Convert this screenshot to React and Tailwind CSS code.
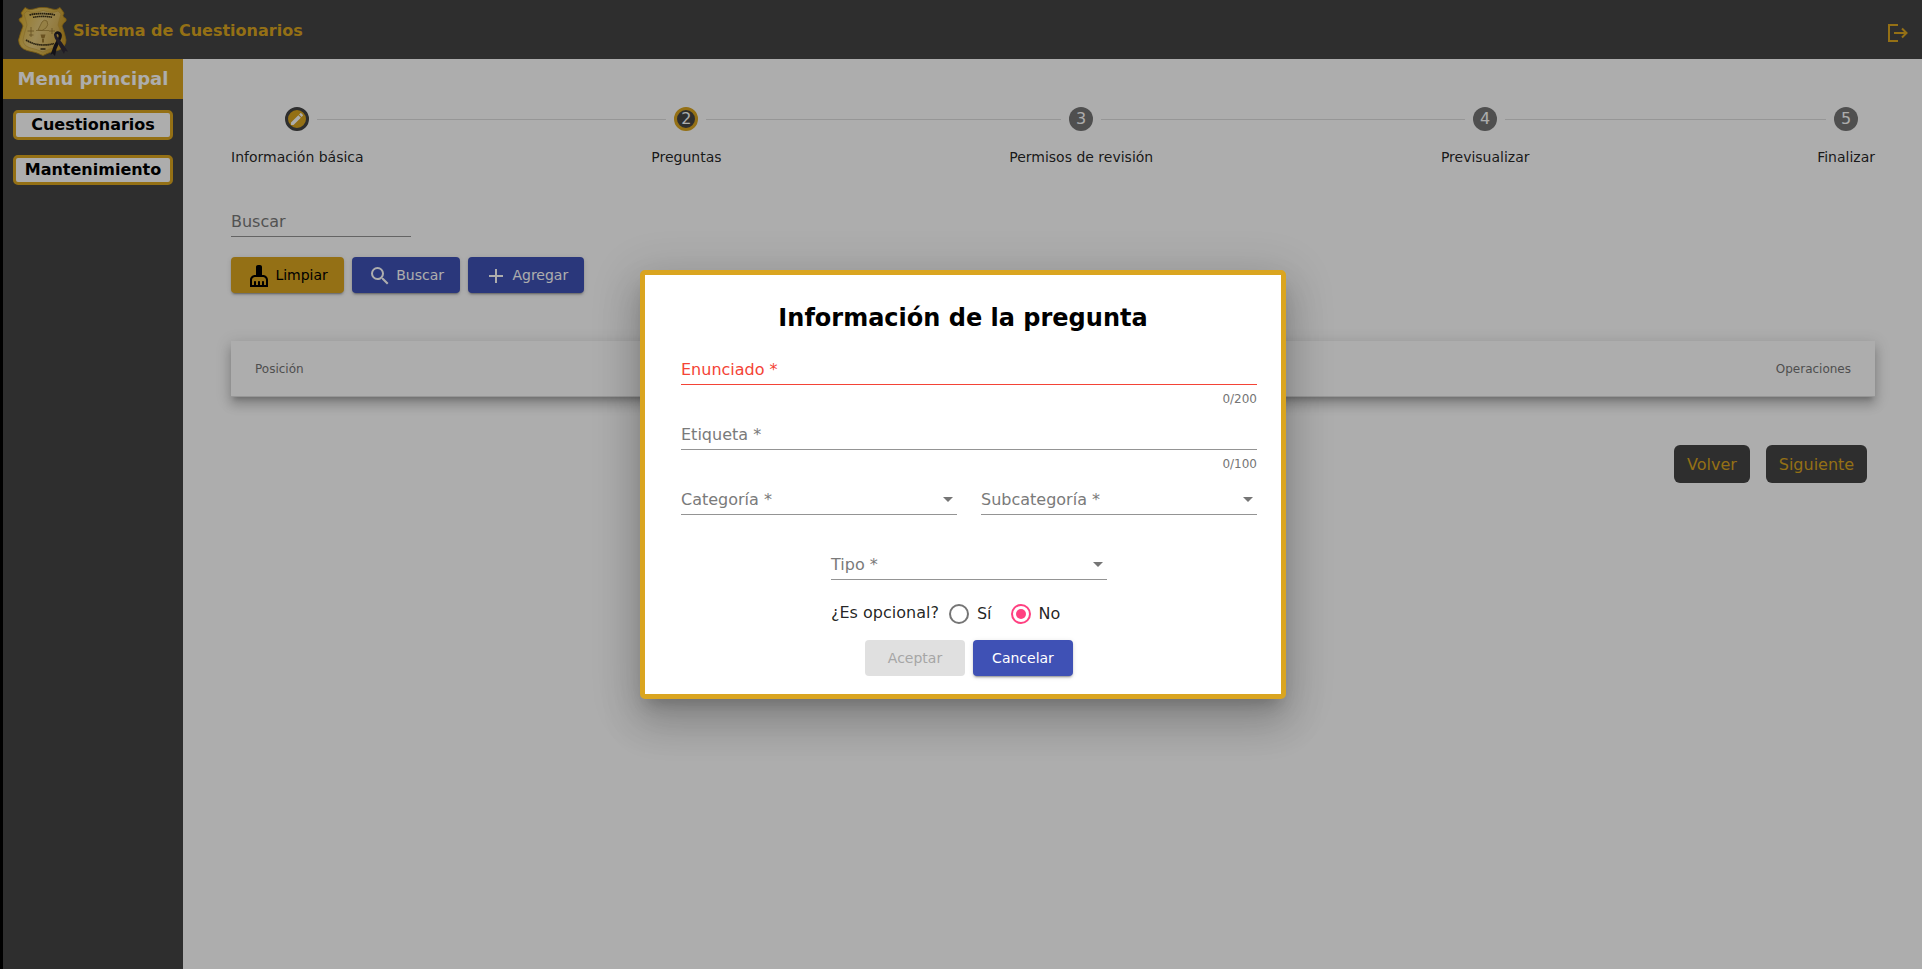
import React from "react";

const steps = ["Información básica", "Preguntas", "Permisos de revisión", "Previsualizar", "Finalizar"];

function Shield() {
  return (
    <svg width="50" height="50" viewBox="0 0 50 50" className="block">
      <defs>
        <linearGradient id="gold" x1="0" x2="1" y1="0" y2="0.3">
          <stop offset="0" stopColor="#dba81c" />
          <stop offset="0.3" stopColor="#e3c05c" />
          <stop offset="0.65" stopColor="#d9b650" />
          <stop offset="1" stopColor="#c99a2a" />
        </linearGradient>
        <linearGradient id="plate" x1="0" x2="1" y1="0" y2="0.4">
          <stop offset="0" stopColor="#dfb640" />
          <stop offset="0.5" stopColor="#e6cb80" />
          <stop offset="1" stopColor="#d4ae50" />
        </linearGradient>
      </defs>
      <path d="M7 .5 Q11 4 16 2 Q21 0 24.500 .5 Q29 0 34 2 Q38 4 42 .5 L46 6 Q44 9 46 10.500 Q49 11 48 14 Q45 16 44 19 Q47 27 48 33 Q48 40 41 43 Q31 45 25 48.500 Q18 45 9 43.500 Q1 41 .5 33 Q2 27 5 19 Q4 16 1.500 14 Q0 11 4 10.500 Q5 8 3 6 Z" fill="url(#gold)" stroke="#b28518" strokeWidth=".8" />
      <path d="M9 4 Q16 7 25 3.500 Q34 7 40 4 L43 7 Q41 13 40 18 Q44 26 44 33 Q43 39 37 40.500 Q30 42 25 45 Q18 42 11 40.500 Q5 38 5 33 Q6 27 9 18 Q8 13 6 7 Z" fill="url(#plate)" stroke="#c19a3a" strokeWidth=".6" />
      <path d="M11.500 7.800 Q24 5.500 37 7.800" fill="none" stroke="#3b3016" strokeWidth="1.800" strokeDasharray="1.6 .4" />
      <path d="M15 10.300 Q25 8.500 34 10.300" fill="none" stroke="#3b3016" strokeWidth="1.600" strokeDasharray="1.6 .4" />
      <path d="M8 33 Q16 38 25 38 Q31 38 36 36.500" fill="none" stroke="#3b3016" strokeWidth="1.700" strokeDasharray="1.600 .4" />
      <path d="M20 23 L24 15 Q26 12 29 14 Q31 18 28 21 Q24 25 20 23 Z M18 23.500 L31 23.500" fill="#dcbd66" stroke="#9c7c30" strokeWidth=".7" />
      <path d="M13 20 V30 M9.500 24 H16 M11 28 H15.500 M34 21 V27 M31 24 H37" stroke="#927432" strokeWidth=".8" />
      <path d="M22.500 27.500 H27.500 L26.500 31 Q25 32 23.500 31 Z M24 32 H26 V35.500 H24 Z" fill="#9c7a30" />
      <path d="M22.500 42 H27.500" stroke="#3b3016" strokeWidth="1.500" />
      <path d="M36 28 Q37 23.500 41 24.500 Q45 26 43.500 31 L38.500 42 L37 49 L34.500 46.500 L32.500 48 L36 38 L40.500 30 Q41 27.500 39.500 27 Q38 27 38 29 Z" fill="#1d1a22" />
      <path d="M36 28 Q36 31 39 35 L46 47 L47 44 L50 44.500 L43.500 35 Q39 30 38.500 28 Q37.500 25.500 36 28 Z" fill="#302b38" />
    </svg>
  );
}

function Connector({ className }) {
  return <span className={"absolute top-[12px] h-px bg-[#dedede] " + className} />;
}

function Step({ label, index }) {
  const tone =
    index === 0
      ? "border-3 border-[#444] bg-[#daa520]"
      : index === 1
        ? "border-3 border-[#daa520] bg-[#444]"
        : "bg-[#757575]";
  return (
    <div className="relative flex flex-col items-center">
      {index > 0 && <Connector className="left-0 right-[calc(50%+20px)]" />}
      {index < 4 && <Connector className="right-0 left-[calc(50%+20px)]" />}
      <div className={"flex h-6 w-6 items-center justify-center rounded-full text-[16px] leading-none text-white " + tone}>
        {index === 0 ? (
          <svg width="16" height="16" viewBox="0 0 24 24" fill="currentColor" className="shrink-0">
            <path d="M3 17.250V21h3.750L17.810 9.940l-3.750-3.750L3 17.250zM20.710 7.040a1 1 0 0 0 0-1.410l-2.340-2.340a1 1 0 0 0-1.410 0l-1.830 1.830 3.750 3.750 1.830-1.830z" />
          </svg>
        ) : (
          <span>{index + 1}</span>
        )}
      </div>
      <div className="mt-4 text-[14px] leading-5 whitespace-nowrap text-black/87">{label}</div>
    </div>
  );
}

const raised = "shadow-[0_3px_1px_-2px_rgba(0,0,0,.2),0_2px_2px_0_rgba(0,0,0,.14),0_1px_5px_0_rgba(0,0,0,.12)]";

function ActionButton({ className, icon, children }) {
  return (
    <button className={"flex h-9 items-center rounded-[4px] px-4 text-[14px] " + raised + " " + className}>
      <span className="mt-0.5 mr-[4.400px] flex h-6 w-6">{icon}</span>
      <span>{children}</span>
    </button>
  );
}

function MenuItem({ children }) {
  return (
    <button className="flex h-[30px] w-full items-center justify-center rounded-[5px] border-3 border-[#daa520] bg-white text-[16px] font-bold text-black">
      {children}
    </button>
  );
}

function Field({ label, counter, error, select, className = "" }) {
  return (
    <div className={"h-[65px] " + className}>
      <div
        className={
          "flex h-[25px] items-start justify-between border-b text-[16px] leading-[20px] " +
          (error ? "border-[#f44336] text-[#f44336]" : "border-[#949494] text-[#7a7a7a]")
        }
      >
        <span>{label}</span>
        {select && <span className="mt-[7px] mr-1 h-0 w-0 border-x-5 border-t-5 border-x-transparent border-t-[#757575]" />}
      </div>
      {counter && <div className="mt-[7px] text-right text-[12px] leading-[14px] text-[#757575]">{counter}</div>}
    </div>
  );
}

function Radio({ label, checked }) {
  return (
    <label className="flex items-center gap-2">
      <span className={"flex h-5 w-5 items-center justify-center rounded-full border-2 " + (checked ? "border-[#ff4081]" : "border-[#757575]")}>
        {checked && <span className="h-2.5 w-2.5 rounded-full bg-[#ff4081]" />}
      </span>
      <span>{label}</span>
    </label>
  );
}

function Dialog() {
  return (
    <div className="h-[429px] w-[646px] rounded-[5px] border-5 border-[#daa520] bg-white pt-[29px] pr-6 pl-9 shadow-[0_11px_15px_-7px_rgba(0,0,0,.2),0_24px_38px_3px_rgba(0,0,0,.14),0_9px_46px_8px_rgba(0,0,0,.12)]">
      <h1 className="mr-3 text-center text-[24px] leading-[28px] font-bold text-black">Información de la pregunta</h1>
      <div className="mt-[28px] flex flex-col">
        <Field label="Enunciado *" counter="0/200" error />
        <Field label="Etiqueta *" counter="0/100" />
        <div className="flex gap-6">
          <Field label="Categoría *" select className="flex-1" />
          <Field label="Subcategoría *" select className="flex-1" />
        </div>
        <Field label="Tipo *" select className="w-[276px] self-center" />
      </div>
      <div className="-mt-4 ml-[150px] flex h-5 items-center text-[16px] text-black/87">
        <span className="mr-[10px] pb-0.5">¿Es opcional?</span>
        <div className="flex gap-[19px]">
          <Radio label="Sí" />
          <Radio label="No" checked />
        </div>
      </div>
      <div className="mt-4 flex justify-center gap-2 text-[14px]">
        <button className="h-9 w-[100px] rounded-[4px] bg-[#e0e0e0] text-[#a6a6a6]">Aceptar</button>
        <button className={"h-9 w-[100px] rounded-[4px] bg-[#3f51b5] text-white " + raised}>Cancelar</button>
      </div>
    </div>
  );
}

export default function App() {
  return (
    <div className="relative h-[969px] w-[1922px] overflow-hidden bg-black pl-[3px] font-['DejaVu_Sans',sans-serif]">
      <div className="flex h-full flex-col">
        <header className="flex h-[59px] shrink-0 items-center justify-between bg-[#444] pr-[12px] pl-[15px] text-[#daa520]">
          <div className="flex items-center">
            <div className="mt-[5px] h-[50px] w-[50px]">
              <Shield />
            </div>
            <span className="ml-[5px] pt-0.5 text-[16px] font-bold">Sistema de Cuestionarios</span>
          </div>
          <svg width="24" height="24" viewBox="0 0 24 24" fill="none" stroke="currentColor" strokeWidth="2" className="mt-[7px]">
            <path d="M12 4H3v16h9M8 12h12.500M16 7.500l4.500 4.500-4.500 4.500" />
          </svg>
        </header>
        <div className="flex flex-1">
          <aside className="w-[180px] shrink-0 bg-[#444]">
            <div className="flex h-10 items-center justify-center bg-[#daa520] pb-0.5 text-[18px] font-bold text-white">Menú principal</div>
            <nav className="mt-[11px] flex flex-col gap-[15px] px-[10px]">
              <MenuItem>Cuestionarios</MenuItem>
              <MenuItem>Mantenimiento</MenuItem>
            </nav>
          </aside>
          <main className="flex-1 bg-white pt-12 pr-[47px] pl-12">
            <div className="flex">
              {steps.map((label, i) => (
                <React.Fragment key={label}>
                  {i > 0 && <span className="mt-[12px] h-px flex-1 bg-[#dedede]" />}
                  <Step label={label} index={i} />
                </React.Fragment>
              ))}
            </div>
            <div className="mt-[45px] h-[25px] w-[180px] border-b border-[#949494] text-[16px] leading-[20px] text-[#7a7a7a]">Buscar</div>
            <div className="mt-5 flex gap-2">
              <ActionButton
                className="bg-[#daa520] text-black"
                icon={
                  <svg width="24" height="24" viewBox="0 0 24 24" fill="currentColor">
                    <path d="M16 11h-1V3c0-1.100-.9-2-2-2h-2c-1.100 0-2 .9-2 2v8H8c-2.760 0-5 2.240-5 5v7h18v-7c0-2.760-2.240-5-5-5zm3 10h-2v-3c0-.55-.45-1-1-1s-1 .45-1 1v3h-2v-3c0-.55-.45-1-1-1s-1 .45-1 1v3H9v-3c0-.55-.45-1-1-1s-1 .45-1 1v3H5v-5c0-1.650 1.350-3 3-3h8c1.650 0 3 1.350 3 3v5z" />
                  </svg>
                }
              >
                Limpiar
              </ActionButton>
              <ActionButton
                className="bg-[#3f51b5] text-white"
                icon={
                  <svg width="24" height="24" viewBox="0 0 24 24" fill="currentColor">
                    <path d="M15.500 14h-.79l-.28-.27A6.471 6.471 0 0 0 16 9.500 6.500 6.500 0 1 0 9.500 16c1.610 0 3.090-.59 4.230-1.570l.27.28v.79l5 4.990L20.490 19l-4.990-5zm-6 0C7.010 14 5 11.990 5 9.500S7.010 5 9.500 5 14 7.010 14 9.500 11.990 14 9.500 14z" />
                  </svg>
                }
              >
                Buscar
              </ActionButton>
              <ActionButton
                className="bg-[#3f51b5] text-white"
                icon={
                  <svg width="24" height="24" viewBox="0 0 24 24" fill="currentColor">
                    <path d="M19 13h-6v6h-2v-6H5v-2h6V5h2v6h6v2z" />
                  </svg>
                }
              >
                Agregar
              </ActionButton>
            </div>
            <div className="mt-12 flex h-14 items-center justify-between border-b border-[#dedede] bg-white px-6 text-[12px] text-[#757575] shadow-[0_5px_5px_-3px_rgba(0,0,0,.2),0_8px_10px_1px_rgba(0,0,0,.14),0_3px_14px_2px_rgba(0,0,0,.12)]">
              <span>Posición</span>
              <span>Operaciones</span>
            </div>
            <div className="mt-12 mr-2 flex justify-end gap-4 text-[16px] text-[#daa520]">
              <button className="h-[38px] w-[76px] rounded-[6px] bg-[#444] pt-0.5">Volver</button>
              <button className="h-[38px] w-[101px] rounded-[6px] bg-[#444] pt-0.5">Siguiente</button>
            </div>
          </main>
        </div>
      </div>
      <div className="absolute inset-0 flex items-center justify-center bg-black/32 pl-1">
        <Dialog />
      </div>
    </div>
  );
}
